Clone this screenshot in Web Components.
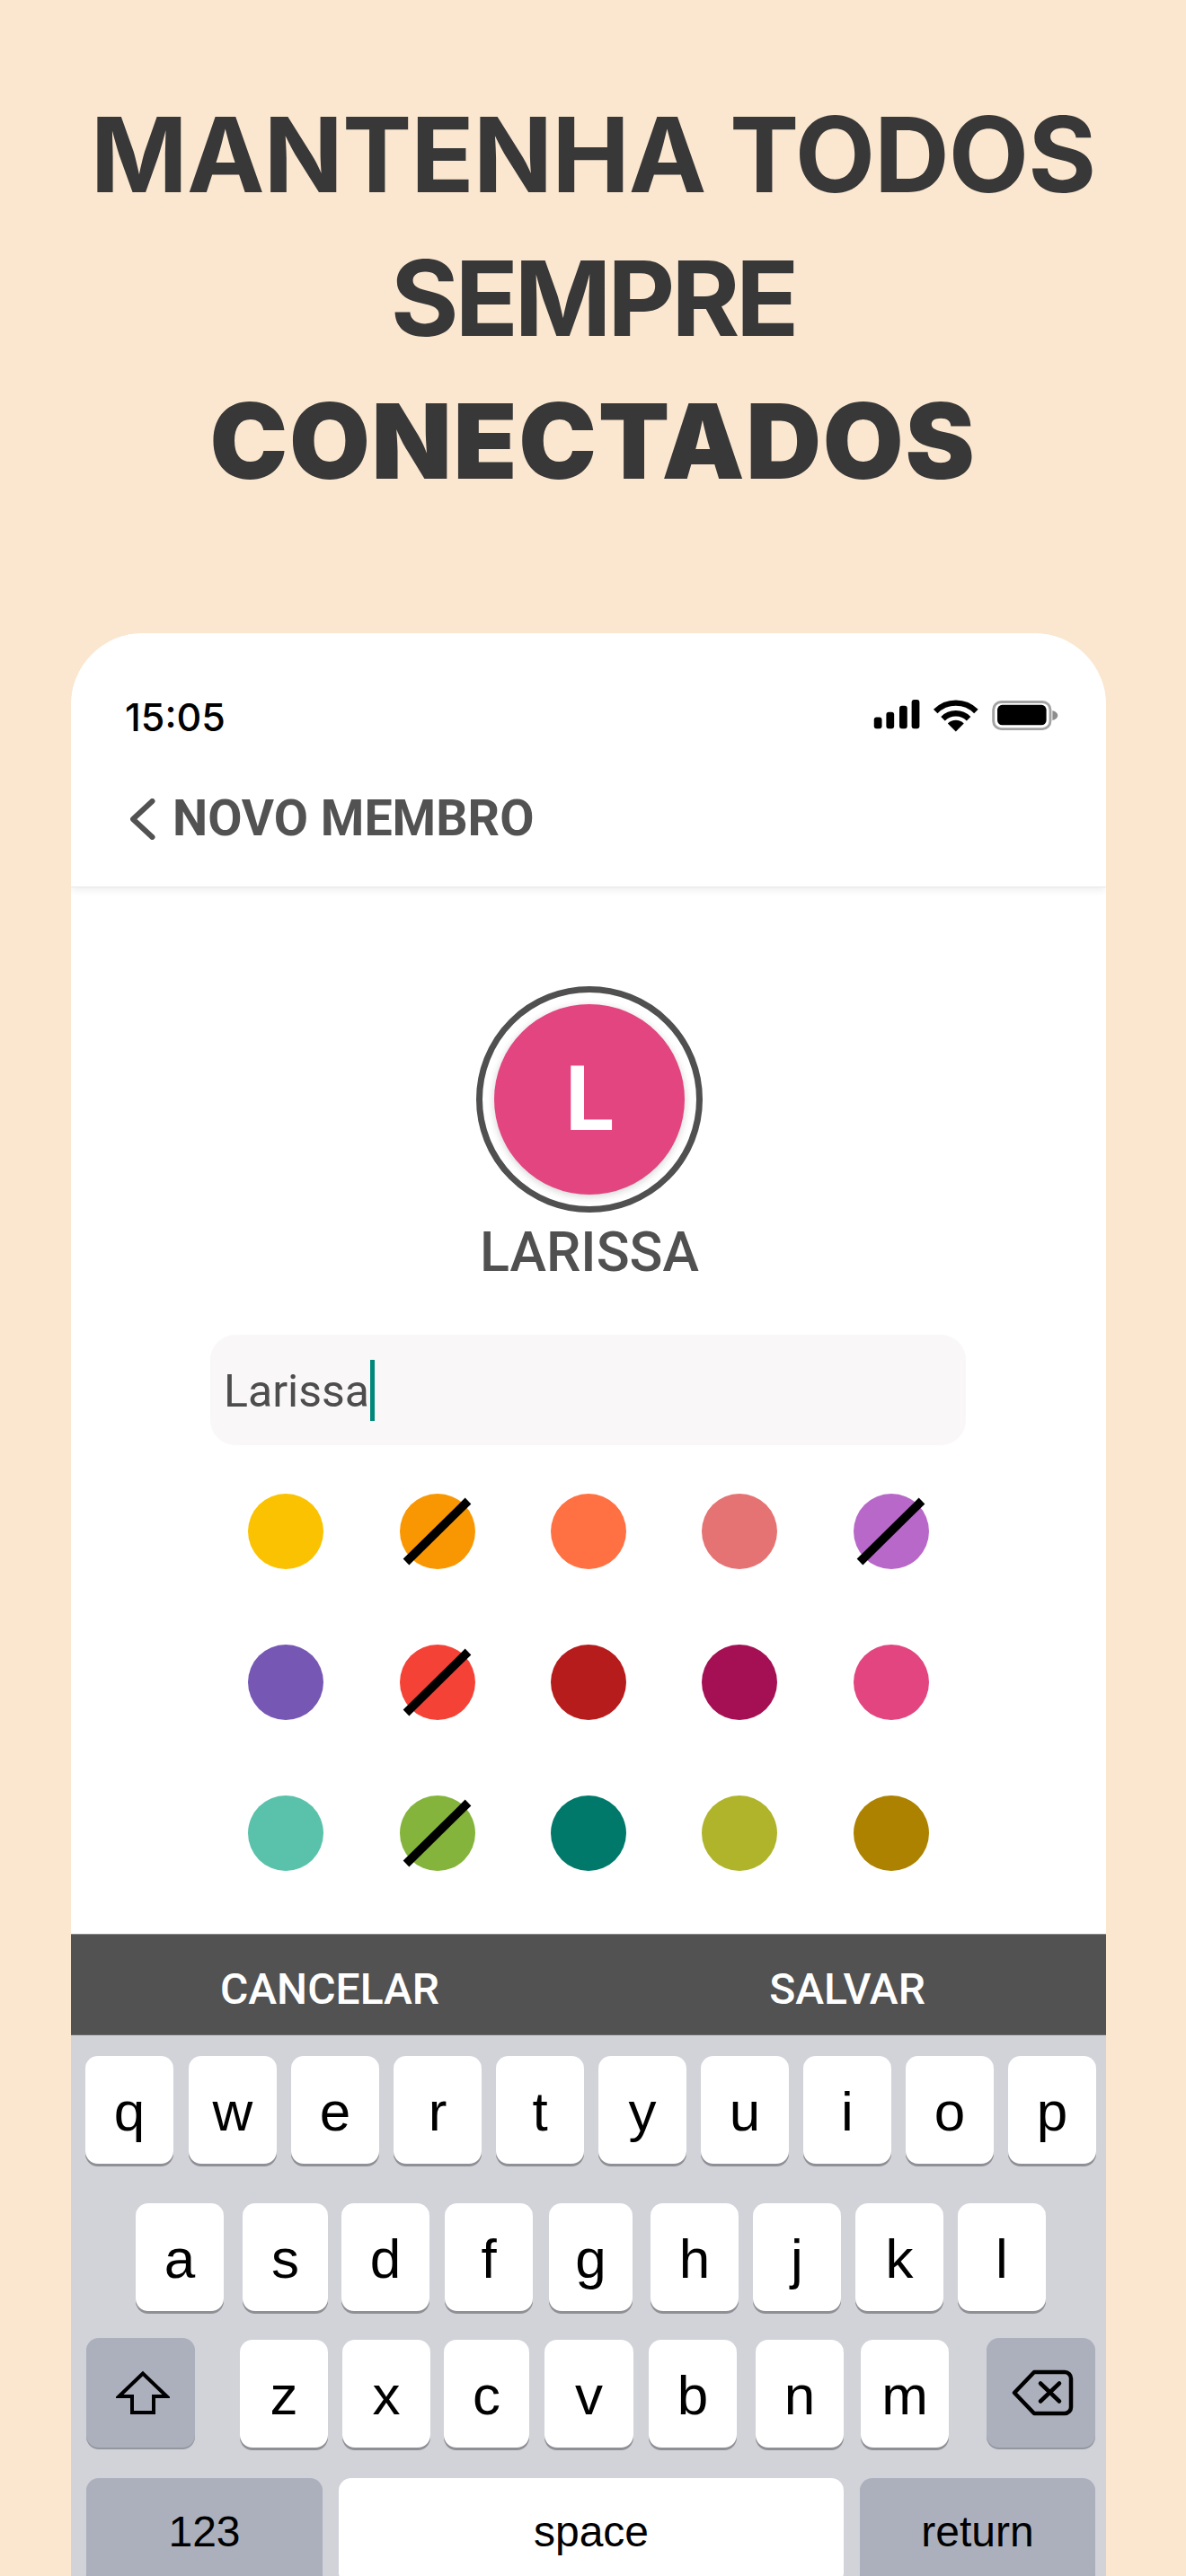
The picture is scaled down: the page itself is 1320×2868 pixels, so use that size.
<!DOCTYPE html>
<html lang="pt">
<head>
<meta charset="utf-8">
<title>Novo membro</title>
<style>
html,body{margin:0;padding:0;background:#fbe7d0}
body{width:1320px;height:2868px;overflow:hidden;font-family:"Roboto",sans-serif}
</style>
</head>
<body>
<promo-page>
  <hero-title slot="title"></hero-title>
  <phone-frame slot="phone">
    <app-header></app-header>
    <member-form></member-form>
    <action-bar></action-bar>
    <ios-keyboard></ios-keyboard>
  </phone-frame>
</promo-page>
<script>
function def(name, css, html, setup){
  customElements.define(name, class extends HTMLElement{
    constructor(){
      super();
      const r=this.attachShadow({mode:'open'});
      r.innerHTML='<style>'+css+'</style>'+html;
      if(setup) setup.call(this,r);
    }
  });
}

def('promo-page',
 ':host{display:flex;flex-direction:column;width:1320px;height:2868px;overflow:hidden}',
 '<slot name="title"></slot><slot name="phone"></slot>');

def('hero-title',
 `:host{display:block;height:705px;box-sizing:border-box;padding-top:93px;text-align:center;color:#383838;
   font-family:"Inter",sans-serif;font-size:116px;line-height:159.5px}
  div{white-space:nowrap;font-weight:650}
  .b{font-weight:900}`,
 '<div style="letter-spacing:-1px">MANTENHA TODOS</div><div style="letter-spacing:-4.300px">SEMPRE</div><div class="b" style="letter-spacing:1.700px">CONECTADOS</div>');

def('phone-frame',
 `:host{display:flex;flex-direction:column;width:1152px;height:2163px;margin-left:79px;background:#fff;
   border-radius:80px 80px 0 0;overflow:hidden}`,
 '<slot></slot>');

def('app-header',
 `:host{display:block;height:283px;box-sizing:border-box;background:#fff;position:relative;z-index:1;
   border-bottom:1px solid #e9e9e9;box-shadow:0 3px 8px rgba(0,0,0,.07);padding:63px 0 0 60px}
  .status{display:flex;align-items:center;justify-content:space-between;height:60px;padding-right:51px}
  .time{font:500 43px/60px "Inter",sans-serif;color:#000}
  .icons{display:flex;align-items:flex-start;height:37px;margin-top:-1px}
  .nav{display:flex;align-items:center;height:60px;margin-top:54px;color:#525252;padding-left:6px}
  .nav svg{display:block;margin-right:19px;flex:none}
  .nav span{font:700 55.500px/60px "Roboto",sans-serif}`,
 `<div class="status"><span class="time">15:05</span>
   <svg class="icons" width="210" height="38" viewBox="0 0 210 38" aria-hidden="true">
     <rect x="0" y="20" width="9" height="13" rx="3"/><rect x="14" y="14" width="9" height="19" rx="3"/>
     <rect x="29" y="7" width="9" height="26" rx="3"/><rect x="43" y="0" width="9" height="33" rx="3"/>
     <g transform="translate(93.5 36.5)">
       <path d="M-23.2-23.2A32.75 32.75 0 0 1 23.2-23.2" fill="none" stroke="#000" stroke-width="6.5"/>
       <path d="M-14.7-14.7A20.75 20.75 0 0 1 14.7-14.7" fill="none" stroke="#000" stroke-width="6.5"/>
       <path d="M0 0L-9.2-9.2A13 13 0 0 1 9.2-9.2Z"/>
     </g>
     <rect x="136.5" y="2.5" width="65" height="31" rx="9" fill="none" stroke="#a3a3a3" stroke-width="3"/>
     <rect x="141" y="6" width="56" height="23" rx="5.5"/>
     <path d="M204 12.500c3.500.6 6 2.800 6 5.500s-2.500 4.900-6 5.500z" fill="#8d8d8d"/>
   </svg></div>
  <div class="nav">
   <svg width="28" height="46" viewBox="0 0 28 46" aria-hidden="true"><path d="M24.500 3L3 23l21.500 20" fill="none" stroke="#525252" stroke-width="6" stroke-linecap="round" stroke-linejoin="round"/></svg>
   <span>NOVO MEMBRO</span></div>`);

def('member-avatar',
 `:host{display:flex;align-items:center;justify-content:center;width:252px;height:252px;box-sizing:border-box;
   border:7px solid #505050;border-radius:50%;background:#fff;margin-left:2px}
  div{display:flex;align-items:center;justify-content:center;width:212px;height:212px;border-radius:50%;background:#e2457f;
   box-shadow:0 2px 8px rgba(0,0,0,.18);color:#fff;font:700 100px/1 "Roboto",sans-serif}`,
 '<div><slot></slot></div>');

def('name-field',
 `:host{display:flex;align-items:center;box-sizing:border-box;width:841px;height:123px;margin-left:-1px;background:#f9f7f8;border-radius:28px;padding-left:15px;
   color:#4d4d4d;font:400 50px/1 "Roboto",sans-serif}
  i{display:block;width:5px;height:68px;background:#00897b;margin-left:1px}
  span{position:relative;top:1.500px}`,
 '<span><slot></slot></span><i></i>');

def('color-swatch',
 `:host{display:flex;align-items:center;justify-content:center;height:168px}
  div{position:relative;width:84px;height:84px;border-radius:50%;background:var(--c)}
  svg{position:absolute;left:0;top:0;overflow:visible;display:none}
  :host([blocked]) svg{display:block}`,
 `<div><svg width="84" height="84" viewBox="0 0 84 84" aria-hidden="true"><path d="M7 76L76 8" stroke="#000" stroke-width="9.500"/></svg></div>`);

def('member-form',
 `:host{display:flex;flex-direction:column;align-items:center;height:1165px;box-sizing:border-box;padding-top:110px;background:#fff}
  .name{font:500 61px/70px "Roboto",sans-serif;color:#505050;margin:9px 0 57px 2px;height:70px}
  .grid{display:grid;grid-template-columns:repeat(5,168.400px);margin-top:12px;width:842px}`,
 `<member-avatar>L</member-avatar><div class="name">LARISSA</div><name-field>Larissa</name-field><div class="grid"></div>`,
 function(r){
  const g=r.querySelector('.grid');
  [['#fac200'],['#f99703',1],['#ff7143'],['#e57373'],['#b868c8',1],
   ['#7657b4'],['#f44336',1],['#b71c1c'],['#a51055'],['#e2457f'],
   ['#5ac2aa'],['#84b43b',1],['#00796b'],['#afb42b'],['#ad8200']].forEach(([c,b])=>{
     const s=document.createElement('color-swatch');
     s.style.setProperty('--c',c); if(b) s.setAttribute('blocked','');
     g.appendChild(s);
   });
 });

def('action-bar',
 `:host{display:flex;height:113px;box-sizing:border-box;background:#525252;border-top:1px solid #8a8a8a;border-bottom:1px solid #6a6a6a;color:#fff}
  div{flex:1;display:flex;align-items:center;justify-content:center;font:500 48px/1 "Roboto",sans-serif;padding-top:11px;box-sizing:border-box}
  div:first-child{border-right:1px solid #626262}`,
 '<div>CANCELAR</div><div>SALVAR</div>');

def('kb-key',
 `:host{display:flex;flex:none;align-items:center;justify-content:center;height:120px;box-sizing:border-box;border-radius:14px;
   background:#fff;box-shadow:0 3px 0 #8f9095;color:#000;font:400 62px/1 "Liberation Sans",Arial,sans-serif;padding-top:4px}
  :host([fn]){background:#acb0bc;box-shadow:0 2px 0 #94979f;padding-top:0}
  :host([small]){font-size:48px;padding-top:0}
  svg{display:block}`,
 '<slot></slot>');

const SHIFT='<svg width="60" height="50" viewBox="0 0 60 50" style="display:block;margin:0 0 0 4px" aria-hidden="true"><path d="M30 3.500L3.500 29h14.500v18h24V29h14.500z" fill="none" stroke="#000" stroke-width="4" stroke-linejoin="miter"/></svg>';
const BACK='<svg width="70" height="54" viewBox="0 0 70 54" style="display:block;margin:0 0 0 4px" aria-hidden="true"><path d="M3 27L25 4h34a7 7 0 0 1 7 7v32a7 7 0 0 1-7 7H25z" fill="none" stroke="#000" stroke-width="4.500" stroke-linejoin="round"/><path d="M32 16.500l21 20M53 16.500l-21 20" fill="none" stroke="#000" stroke-width="4.500" stroke-linecap="round"/></svg>';

def('ios-keyboard',
 `:host{display:block;flex:1;background:#d1d3d9;padding-top:23px;overflow:hidden}
  .row{display:flex;height:120px}`,
 '',
 function(r){
  const O=79;
  const rows=[
   {gap:0,keys:[['q',95,98],['w',210,98],['e',324,98],['r',438,98],['t',552,98],['y',666,98],['u',780,98],['i',894,98],['o',1008,98],['p',1122,98]]},
   {gap:44,keys:[['a',151,98],['s',270,95],['d',380,98],['f',495,98],['g',611,93],['h',724,98],['j',838,98],['k',952,98],['l',1066,98]]},
   {gap:32,keys:[[SHIFT,96,121,'fn',-2],['z',267,98],['x',381,98],['c',494,95],['v',606,99],['b',722,98],['n',841,98],['m',958,98],[BACK,1098,121,'fn',-2]]},
   {gap:34,keys:[['123',96,263,'fn small'],['space',377,562,'small'],['return',957,262,'fn small']]}
  ];
  rows.forEach(row=>{
   const d=document.createElement('div');d.className='row';d.style.marginTop=row.gap+'px';
   let x=O;
   row.keys.forEach(([t,kx,w,flags,up])=>{
    const k=document.createElement('kb-key');
    if(t[0]==='<') k.innerHTML=t; else k.textContent=t;
    (flags||'').split(' ').filter(Boolean).forEach(f=>k.setAttribute(f,''));
    k.style.width=w+'px';k.style.marginLeft=(kx-x)+'px';
    if(up){k.style.marginTop=up+'px';k.style.height='122px';}
    d.appendChild(k);x=kx+w;
   });
   r.appendChild(d);
  });
 });
</script>
</body>
</html>
